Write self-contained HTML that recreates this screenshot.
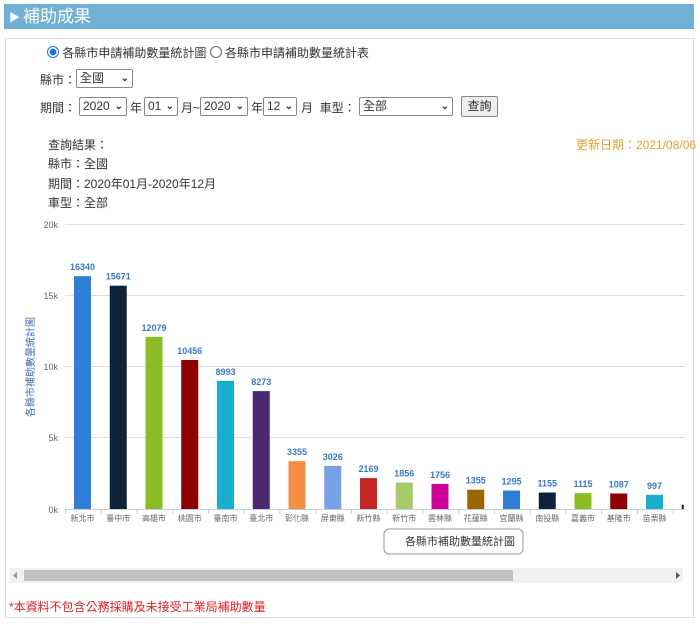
<!DOCTYPE html>
<html><head><meta charset="utf-8"><style>
body{margin:0;width:700px;height:630px;background:#fff;font-family:"Liberation Sans","Noto Sans CJK TC",sans-serif;position:relative;overflow:hidden;color:#333}
.hdr{position:absolute;left:4px;top:4px;width:690px;height:25px;background:#6fb0d4;color:#fff;font-size:17px;line-height:25px}
.box{position:absolute;left:5px;top:38px;width:687px;height:578px;border:1px solid #ddd}
.t{position:absolute;font-size:12px;white-space:nowrap}
.sel{position:absolute;font-size:12px;height:19px;line-height:17px;border:1px solid #888;border-radius:2px;background:#fff;padding:0 3px;box-sizing:border-box;white-space:nowrap}
.sel i{position:absolute;right:3px;top:0;font-style:normal;font-size:10px;font-weight:bold}
.btn{position:absolute;font-size:12px;border:1px solid #888;border-radius:2px;background:#eee;text-align:center;line-height:19px;height:21px;box-sizing:border-box}
</style></head><body>
<div class="hdr"><span style="font-size:11px;margin-left:5px;vertical-align:1px">▶</span><span style="margin-left:3px">補助成果</span></div>
<div class="box"></div>
<div class="t" style="left:47px;top:44px"><span style="display:inline-block;width:10px;height:10px;border-radius:50%;border:1px solid #1a73e8;background:radial-gradient(#1a73e8 45%,#fff 50%);vertical-align:-1px"></span> 各縣市申請補助數量統計圖 <span style="display:inline-block;width:10px;height:10px;border-radius:50%;border:1px solid #666;vertical-align:-1px"></span> 各縣市申請補助數量統計表</div>
<div class="t" style="left:40px;top:71px">縣市：</div>
<div class="sel" style="left:76px;top:69px;width:57px">全國<i>⌄</i></div>
<div class="t" style="left:40px;top:99px">期間：</div>
<div class="sel" style="left:79px;top:97px;width:48px">2020<i>⌄</i></div>
<div class="t" style="left:130px;top:99px">年</div>
<div class="sel" style="left:144px;top:97px;width:34px">01<i>⌄</i></div>
<div class="t" style="left:181px;top:99px">月~</div>
<div class="sel" style="left:200px;top:97px;width:48px">2020<i>⌄</i></div>
<div class="t" style="left:251px;top:99px">年</div>
<div class="sel" style="left:263px;top:97px;width:34px">12<i>⌄</i></div>
<div class="t" style="left:301px;top:99px">月 &nbsp;車型：</div>
<div class="sel" style="left:359px;top:97px;width:94px">全部<i>⌄</i></div>
<div class="btn" style="left:461px;top:96px;width:37px">查詢</div>
<div class="t" style="left:48px;top:136px">查詢結果：</div>
<div class="t" style="left:576px;top:136px;color:#e0a030">更新日期：2021/08/06</div>
<div class="t" style="left:48px;top:155px">縣市：全國</div>
<div class="t" style="left:48px;top:175px">期間：2020年01月-2020年12月</div>
<div class="t" style="left:48px;top:194px">車型：全部</div>
<svg style="position:absolute;left:0;top:0" width="700" height="630" font-family="Liberation Sans,Noto Sans CJK TC,sans-serif">
<g stroke="#ddd" stroke-width="1">
<line x1="65" y1="224.5" x2="685" y2="224.5"/><line x1="65" y1="295.5" x2="685" y2="295.5"/><line x1="65" y1="366.5" x2="685" y2="366.5"/><line x1="65" y1="437.5" x2="685" y2="437.5"/>
<line x1="65" y1="509.5" x2="685" y2="509.5" stroke="#c0d0e0"/>
</g>
<g font-size="9" fill="#666" text-anchor="end"><text x="58" y="228">20k</text><text x="58" y="299">15k</text><text x="58" y="370">10k</text><text x="58" y="441">5k</text><text x="58" y="513">0k</text></g>
<text transform="translate(34,367) rotate(-90)" font-size="10" fill="#3a6fb0" text-anchor="middle">各縣市補助數量統計圖</text>
<g id="bars"></g>
<rect x="384" y="529" width="139" height="25" rx="5" fill="#fff" stroke="#999"/>
<text x="515" y="545" font-size="11" fill="#333" text-anchor="end">各縣市補助數量統計圖</text>
<rect x="9" y="568" width="674" height="15" fill="#f1f1f1"/>
<rect x="24" y="570" width="489" height="11" fill="#c1c1c1"/>
<path d="M17 572 L13 575.5 L17 579Z" fill="#999"/><path d="M676 572 L680 575.5 L676 579Z" fill="#555"/>
</svg>
<div class="t" style="left:9px;top:598px;color:#e02020">*本資料不包含公務採購及未接受工業局補助數量</div>
<script>
var v=[16340,15671,12079,10456,8993,8273,3355,3026,2169,1856,1756,1355,1295,1155,1115,1087,997,300];
var c=["#2f7ed8","#0d233a","#8bbc21","#910000","#1aadce","#492970","#f28f43","#77a1e5","#c42525","#a6c96a","#cc0099","#996600","#2f7ed8","#0d233a","#8bbc21","#910000","#1aadce","#0d233a"];
var n=["新北市","臺中市","高雄市","桃園市","臺南市","臺北市","彰化縣","屏東縣","新竹縣","新竹市","雲林縣","花蓮縣","宜蘭縣","南投縣","嘉義市","基隆市","苗栗縣","嘉"];
var s="";
for(var i=0;i<18;i++){var x=74+i*35.75,h=v[i]*0.01425,y=509-h;
var w=i==17?2:17;
s+='<rect x="'+x+'" y="'+y+'" width="'+w+'" height="'+h+'" fill="'+c[i]+'"/>';
if(i<17){s+='<text x="'+(x+8.5)+'" y="'+(y-6)+'" font-size="9" font-weight="bold" fill="#3a78c8" text-anchor="middle">'+v[i]+'</text>';
s+='<text x="'+(x+8.5)+'" y="521" font-size="8" fill="#666" text-anchor="middle">'+n[i]+'</text>';}
s+='<line x1="'+(65.5+i*35.75)+'" y1="510" x2="'+(65.5+i*35.75)+'" y2="514" stroke="#c0d0e0"/>';}
document.getElementById("bars").innerHTML=s;
</script>
</body></html>
